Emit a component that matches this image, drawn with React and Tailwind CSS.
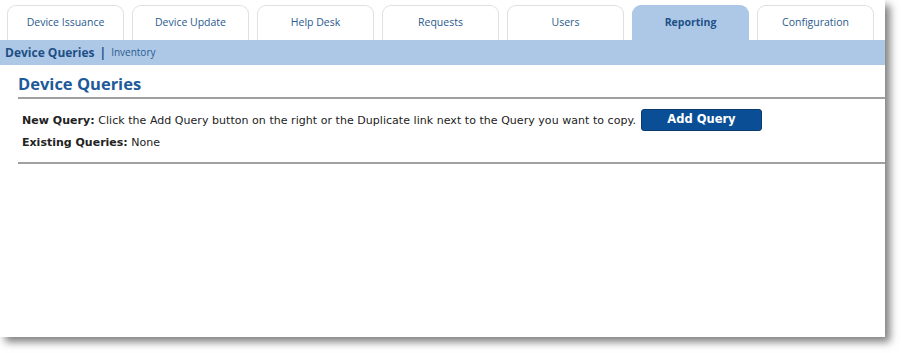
const tabs = [
  "Device Issuance",
  "Device Update",
  "Help Desk",
  "Requests",
  "Users",
  "Reporting",
  "Configuration",
];

export default function App() {
  return (
    <div className="w-[901px] h-[353px] bg-white overflow-hidden">
      <div className="w-[885px] h-[337px] bg-white shadow-[5px_5px_8px_rgba(0,0,0,0.5)] flex flex-col">
        {/* TABS */}
        <div className="flex gap-[8px] pl-[7px] pt-[5px] h-[40px] font-['Open_Sans',sans-serif]">
          {tabs.map((t) => (
            <div
              key={t}
              className={
                t === "Reporting"
                  ? "w-[117px] h-[35px] rounded-t-[9px] border border-b-0 border-[#adc8e6] bg-[#adc8e6] flex items-center justify-center text-[10.5px] font-bold text-[#1d4f86]"
                  : "w-[117px] h-[35px] rounded-t-[9px] border border-b-0 border-[#e0e0e0] bg-white flex items-center justify-center text-[10.5px] text-[#2a5a8e]"
              }
            >
              {t}
            </div>
          ))}
        </div>

        {/* SUB NAV */}
        <div className="h-[25px] bg-[#adc8e6] flex items-center pl-[5px] font-['Open_Sans',sans-serif]">
          <span className="text-[12px] font-bold text-[#1d4f86]">Device Queries</span>
          <span className="text-[12px] font-bold text-[#1d4f86] mx-[5px]">|</span>
          <span className="text-[10px] text-[#2a5a8e]">Inventory</span>
        </div>

        {/* CONTENT */}
        <div className="pl-[18px] pt-[8px]">
          <h1 className="text-[16.5px] font-bold text-[#1d5a9a] font-['Open_Sans',sans-serif] leading-[22px] pb-[2px] border-b-2 border-[#a0a0a0]">
            Device Queries
          </h1>
          <div className="pl-[4px] pt-[10px] pb-[9px] border-b-2 border-[#a0a0a0] font-['DejaVu_Sans',Verdana,sans-serif] text-[11px] text-[#222]">
            <div className="flex items-center gap-[5px] h-[22px]">
              <span className="tracking-[0.04px] pt-[2px]">
                <b>New Query:</b> Click the Add Query button on the right or the Duplicate link next to the Query you want to copy.
              </span>
              <button className="w-[121px] h-[22px] rounded-[3px] bg-[#0a4f96] border border-[#0a3a6e] text-white font-semibold text-[11.5px]">
                Add Query
              </button>
            </div>
            <div className="mt-[2px] h-[20px] flex items-center">
              <span>
                <b>Existing Queries:</b> None
              </span>
            </div>
          </div>
        </div>
      </div>
    </div>
  );
}
